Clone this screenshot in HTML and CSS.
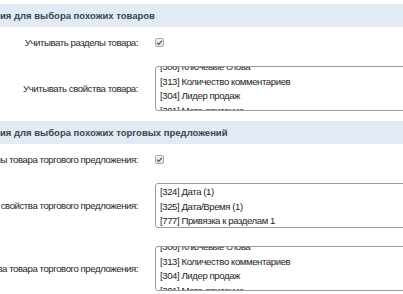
FILE: index.html
```html
<!DOCTYPE html>
<html lang="ru">
<head>
<meta charset="utf-8">
<link rel="stylesheet" href="styles.css">
</head>
<body>
<div class="page">
  <div class="heading">ия для выбора похожих товаров</div>
  <div class="row row-check">
    <div class="label"><span>Учитывать разделы товара:</span></div>
    <div class="field"><span class="checkbox"><svg viewBox="0 0 9 9" width="9" height="9"><path d="M2 4.6 L3.8 6.3 L7 2.6" fill="none" stroke="#4a565e" stroke-width="1.2"/></svg></span></div>
  </div>
  <div class="row row-select">
    <div class="label"><span>Учитывать свойства товара:</span></div>
    <div class="field">
      <div class="listbox"><div class="options scrolled">
        <div class="opt">[306] Ключевые слова</div>
        <div class="opt">[313] Количество комментариев</div>
        <div class="opt">[304] Лидер продаж</div>
        <div class="opt">[301] Мета-описание</div>
      </div></div>
    </div>
  </div>

  <div class="heading">ия для выбора похожих торговых предложений</div>
  <div class="row row-check">
    <div class="label"><span>Учитывать разделы товара торгового предложения:</span></div>
    <div class="field"><span class="checkbox"><svg viewBox="0 0 9 9" width="9" height="9"><path d="M2 4.6 L3.8 6.3 L7 2.6" fill="none" stroke="#4a565e" stroke-width="1.2"/></svg></span></div>
  </div>
  <div class="row row-select">
    <div class="label"><span>Учитывать свойства торгового предложения:</span></div>
    <div class="field">
      <div class="listbox"><div class="options">
        <div class="opt">[324] Дата (1)</div>
        <div class="opt">[325] Дата/Время (1)</div>
        <div class="opt">[777] Привязка к разделам 1</div>
      </div></div>
    </div>
  </div>
  <div class="row row-select">
    <div class="label"><span>Учитывать свойства товара торгового предложения:</span></div>
    <div class="field">
      <div class="listbox"><div class="options scrolled">
        <div class="opt">[306] Ключевые слова</div>
        <div class="opt">[313] Количество комментариев</div>
        <div class="opt">[304] Лидер продаж</div>
        <div class="opt">[301] Мета-описание</div>
      </div></div>
    </div>
  </div>
</div>
</body>
</html>
```
FILE: styles.css
```css
html, body {
  margin: 0;
  padding: 0;
  background: #fff;
  overflow: hidden;
}
body {
  font-family: "Liberation Sans", Arial, sans-serif;
  font-size: 9.6px;
  letter-spacing: -0.42px;
  color: #262626;
}
.page {
  padding-top: 4px;
  width: 403px;
  overflow: hidden;
}
.heading {
  height: 23px;
  line-height: 23px;
  background: #e2ebf4;
  color: #3b464e;
  font-weight: bold;
  font-size: 9.5px;
  letter-spacing: 0;
  white-space: nowrap;
  padding-left: 0;
}
.row {
  display: grid;
  grid-template-columns: 138px 1fr;
  column-gap: 17px;
  align-items: center;
}
.row-check {
  padding: 10px 0;
}
.row-select {
  padding: 8px 0 10px;
}
.label {
  display: flex;
  justify-content: flex-end;
  white-space: nowrap;
  min-width: 0;
}
.field {
  display: flex;
  align-items: center;
  min-width: 0;
}
.checkbox {
  display: block;
  width: 9px;
  height: 9px;
  box-sizing: border-box;
  border: 1px solid #a3aaaf;
  border-radius: 2px;
  background: linear-gradient(#f4f5f6, #dfe3e5);
  position: relative;
}
.checkbox svg {
  position: absolute;
  left: -1px;
  top: -1px;
}
.listbox {
  width: 260px;
  flex: none;
  height: 45px;
  box-sizing: border-box;
  border: 1px solid #9a9a9a;
  border-radius: 3px;
  overflow: hidden;
  background: #fff;
}
.options {
  padding: 1px 0 0 4px;
}
.options.scrolled {
  margin-top: -8px;
}
.opt {
  height: 14.6px;
  line-height: 14.6px;
  white-space: nowrap;
  color: #1e1e1e;
}
```
